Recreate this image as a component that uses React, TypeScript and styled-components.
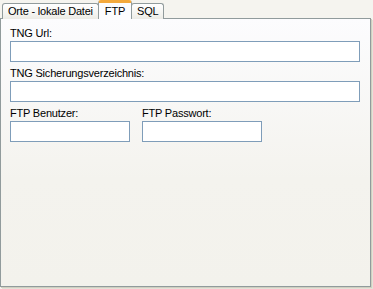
import React, { useState } from 'react';
import styled, { createGlobalStyle } from 'styled-components';

const GlobalStyle = createGlobalStyle`
  html, body {
    margin: 0;
    padding: 0;
    background: #f5f4ef;
  }
  body {
    font-family: Tahoma, "Liberation Sans", "DejaVu Sans", sans-serif;
    font-size: 11px;
    letter-spacing: -0.2px;
    color: #000000;
  }
`;

const tabs = ['Orte - lokale Datei', 'FTP', 'SQL'];

function App() {
  const [active, setActive] = useState(1);
  const [texts, setTexts] = useState({
    url: '',
    backup: '',
    user: '',
    password: '',
  });

  const handleTextChange = (field: string, e: React.ChangeEvent<HTMLInputElement>) => {
    setTexts({
      ...texts,
      [field]: e.target.value,
    });
  };

  return (
    <Window>
      <GlobalStyle />
      <TabRow>
        {tabs.map((t, i) => (
          <Tab key={t} $active={i === active} onClick={() => setActive(i)}>
            {t}
          </Tab>
        ))}
      </TabRow>
      <Panel>
        <Field>
          <Label>TNG Url:</Label>
          <TextBox $width={350} value={texts.url} onChange={(e) => handleTextChange('url', e)} />
        </Field>
        <Field>
          <Label>TNG Sicherungsverzeichnis:</Label>
          <TextBox $width={350} value={texts.backup} onChange={(e) => handleTextChange('backup', e)} />
        </Field>
        <Row>
          <Field>
            <Label>FTP Benutzer:</Label>
            <TextBox $width={120} value={texts.user} onChange={(e) => handleTextChange('user', e)} />
          </Field>
          <Field>
            <Label>FTP Passwort:</Label>
            <TextBox $width={120} type="password" value={texts.password} onChange={(e) => handleTextChange('password', e)} />
          </Field>
        </Row>
      </Panel>
    </Window>
  );
}

const Window = styled.div`
  width: 373px;
  height: 289px;
  display: flex;
  flex-direction: column;
  box-sizing: border-box;
`;

const TabRow = styled.div`
  display: flex;
  align-items: flex-end;
  height: 19px;
  padding-left: 2px;
`;

const Tab = styled.div<{ $active: boolean }>`
  box-sizing: border-box;
  height: ${(p) => (p.$active ? '19px' : '16px')};
  padding: ${(p) => (p.$active ? '2px 6px 0 6px' : '1px 5px 0 5px')};
  line-height: 13px;
  border: 1px solid #919b9c;
  border-bottom: none;
  border-top: ${(p) => (p.$active ? '3px solid #f4a93c' : '1px solid #919b9c')};
  border-radius: 3px 3px 0 0;
  background: ${(p) =>
    p.$active ? '#fcfcfe' : 'linear-gradient(#ffffff, #f3f3ef 70%, #ecebe5)'};
  position: relative;
  z-index: ${(p) => (p.$active ? 2 : 0)};
  margin-left: ${(p) => (p.$active ? '-1px' : '0')};
  margin-right: ${(p) => (p.$active ? '-1px' : '0')};
  cursor: default;
  white-space: nowrap;
  font-size: 11px;
`;

const Panel = styled.div`
  margin-top: -1px;
  width: 371px;
  height: 269px;
  box-sizing: border-box;
  border: 1px solid #919b9c;
  background: linear-gradient(#fcfcfe, #f4f3ee 60%, #f3f2ec);
  box-shadow: 1px 1px 0 #d0cfc0, 2px 2px 0 #e3e2d8;
  padding: 8px 0 0 9px;
  display: flex;
  flex-direction: column;
  gap: 5px;
`;

const Row = styled.div`
  display: flex;
  gap: 12px;
`;

const Field = styled.div`
  display: flex;
  flex-direction: column;
`;

const Label = styled.div`
  line-height: 13px;
  height: 13px;
  margin-bottom: 1px;
  white-space: nowrap;
`;

const TextBox = styled.input<{ $width: number }>`
  box-sizing: border-box;
  width: ${(p) => p.$width}px;
  height: 21px;
  border: 1px solid #7f9db9;
  background: #ffffff;
  margin: 0;
  padding: 1px 3px;
  font-family: inherit;
  font-size: 11px;
  outline: none;
`;

export default App;
